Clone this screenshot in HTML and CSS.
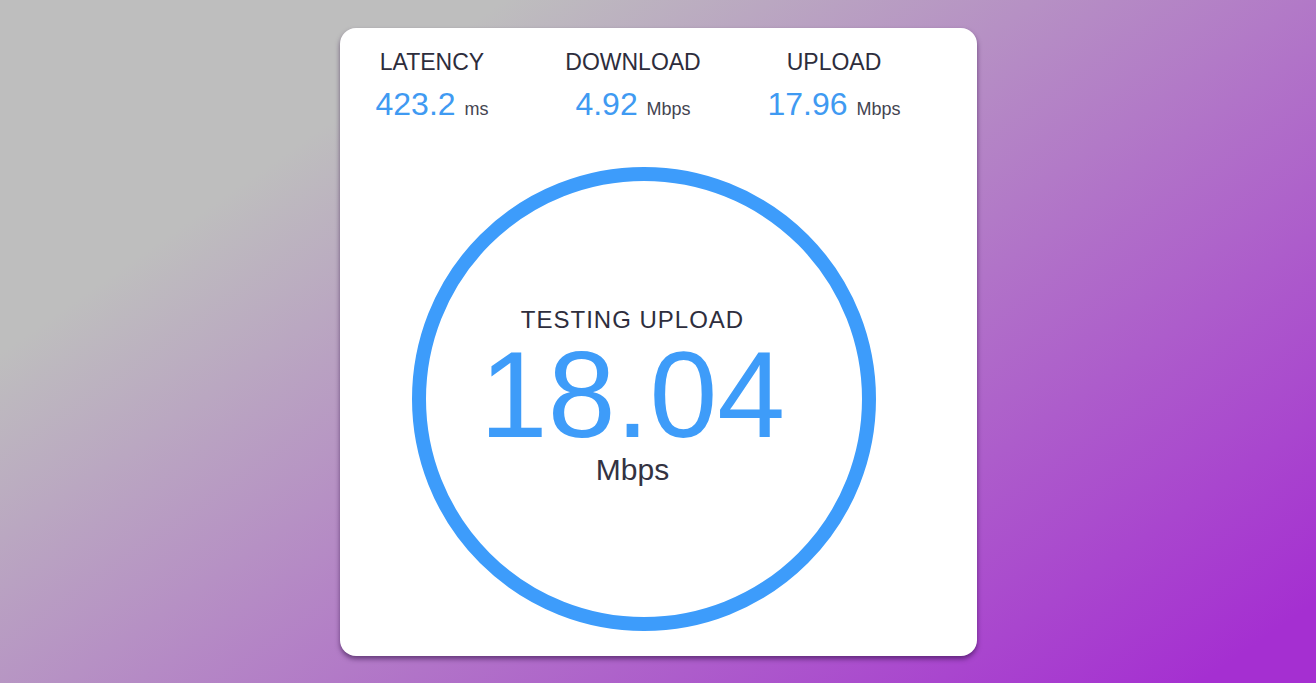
FILE: index.html
```html
<!DOCTYPE html>
<html lang="en">
<head>
<meta charset="utf-8">
<title>Speed Test</title>
<link rel="stylesheet" href="styles.css">
</head>
<body>
  <main class="card">
    <section class="stats">
      <div class="stat">
        <div class="stat-label">LATENCY</div>
        <div class="stat-value">423.2 <span class="unit">ms</span></div>
      </div>
      <div class="stat">
        <div class="stat-label">DOWNLOAD</div>
        <div class="stat-value">4.92 <span class="unit">Mbps</span></div>
      </div>
      <div class="stat">
        <div class="stat-label">UPLOAD</div>
        <div class="stat-value">17.96 <span class="unit">Mbps</span></div>
      </div>
    </section>
    <section class="gauge">
      <div class="gauge-title">TESTING UPLOAD</div>
      <div class="gauge-value">18.04</div>
      <div class="gauge-unit">Mbps</div>
    </section>
  </main>
</body>
</html>
```

FILE: styles.css
```css
html, body {
  margin: 0;
  padding: 0;
  height: 100%;
}

body {
  font-family: "Liberation Sans", Arial, sans-serif;
  background: linear-gradient(145deg, #bebebe 22%, #a52fd1 95%);
  display: flex;
  justify-content: center;
  align-items: center;
  overflow: hidden;
}

.card {
  width: 637px;
  height: 628px;
  box-sizing: border-box;
  background: #ffffff;
  border-radius: 16px;
  box-shadow: 0 3px 5px rgba(40, 10, 60, 0.55);
  padding-top: 21px;
}

.stats {
  display: grid;
  grid-template-columns: repeat(3, 181px);
  column-gap: 20px;
  padding-left: 2px;
}

.stat {
  text-align: center;
}

.stat-label {
  font-size: 23px;
  line-height: 26px;
  color: #2d2d3c;
}

.stat-value {
  margin-top: 10px;
  font-size: 32px;
  line-height: 38px;
  height: 38px;
  color: #3f9af2;
  white-space: nowrap;
}

.unit {
  font-size: 18px;
  line-height: 1;
  color: #444450;
}

.gauge {
  width: 464px;
  height: 464px;
  box-sizing: border-box;
  margin: 44px 0 0 72px;
  border: 14px solid #3d9cfb;
  border-radius: 50%;
  display: flex;
  flex-direction: column;
  align-items: center;
  padding-top: 125px;
  padding-right: 22px;
}

.gauge-title {
  font-size: 24px;
  line-height: 28px;
  letter-spacing: 1px;
  color: #2e2e3d;
}

.gauge-value {
  margin-top: 1px;
  font-size: 122px;
  line-height: 120px;
  color: #3e9cf9;
}

.gauge-unit {
  font-size: 30px;
  line-height: 30px;
  color: #333342;
}
```
